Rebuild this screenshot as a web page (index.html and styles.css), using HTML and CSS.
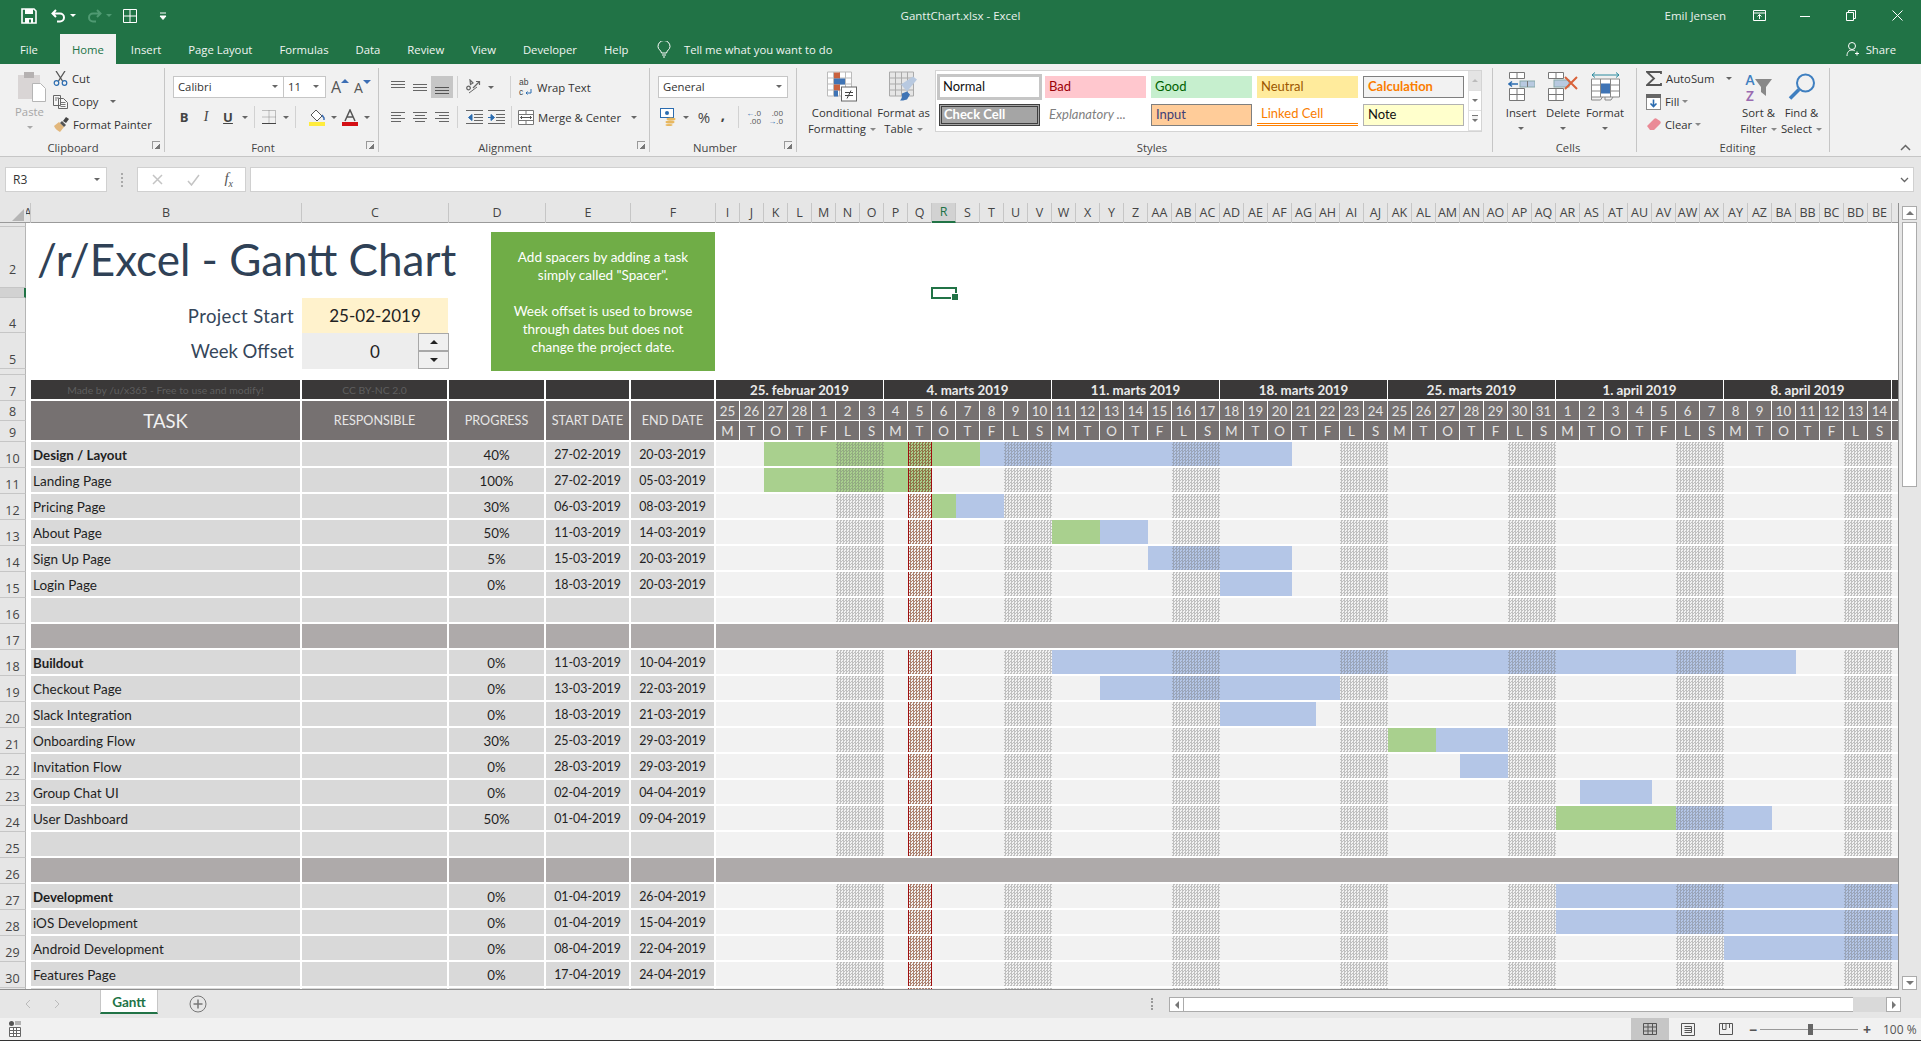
FILE: index.html
```html
<!DOCTYPE html>
<html lang="en">
<head>
  <meta charset="UTF-8" />
  <title>GanttChart.xlsx - Excel</title>
  <link rel="stylesheet" href="styles.css">
</head>
<body>
  <!-- Title bar -->
  <div class="titlebar">
    <div class="qat">
      <svg class="qat-save" width="16" height="16" viewBox="0 0 16 16"><path d="M1 1h12l2 2v12H1z" fill="none" stroke="#fff" stroke-width="1.6"/><rect x="4" y="1" width="8" height="5" fill="#fff"/><rect x="4" y="10" width="8" height="5" fill="#fff"/><rect x="8" y="11.5" width="2" height="3" fill="#217346"/></svg>
      <svg class="qat-undo" width="15" height="14" viewBox="0 0 15 14"><path d="M5 1 1.500 4.500 5 8M2 4.500h7a4 4 0 0 1 0 8H6" fill="none" stroke="#fff" stroke-width="2"/></svg>
      <span class="qat-caret"></span>
      <svg class="qat-redo" width="15" height="14" viewBox="0 0 15 14"><path d="M10 1l3.500 3.500L10 8M13 4.500H6a4 4 0 0 0 0 8h3" fill="none" stroke="#4f9a72" stroke-width="2"/></svg>
      <span class="qat-caret dim"></span>
      <svg class="qat-table" width="14" height="14" viewBox="0 0 14 14"><path d="M.5.500h13v13H.5zM7 .5v13M.5 7h13" fill="none" stroke="#fff"/></svg>
      <svg class="qat-more" width="8" height="8" viewBox="0 0 8 8"><path d="M1 1h6M1 4h6L4 7.500z" fill="#fff" stroke="#fff"/></svg>
    </div>
    <div class="doc-title">GanttChart.xlsx - Excel</div>
    <div class="window-area">
      <span class="user">Emil Jensen</span>
      <span class="win-btn"><svg width="13" height="11" viewBox="0 0 13 11"><path d="M.5.500h12v10H.5zM.5 3h12M6.500 9V4.500M4.500 6.500l2-2 2 2" fill="none" stroke="#fff"/></svg></span>
      <span class="win-btn"><svg width="10" height="10" viewBox="0 0 10 10"><path d="M0 5.500h10" stroke="#fff"/></svg></span>
      <span class="win-btn"><svg width="10" height="11" viewBox="0 0 10 11"><path d="M.5 2.500h7v8h-7zM2.500 2.500v-2h7v8h-2" fill="none" stroke="#fff"/></svg></span>
      <span class="win-btn"><svg width="11" height="11" viewBox="0 0 11 11"><path d="M.5.500l10 10M10.500.5l-10 10" stroke="#fff"/></svg></span>
    </div>
  </div>

  <!-- Ribbon tabs -->
  <div class="tabs">
    <span class="tab">File</span>
    <span class="tab active">Home</span>
    <span class="tab">Insert</span>
    <span class="tab">Page Layout</span>
    <span class="tab">Formulas</span>
    <span class="tab">Data</span>
    <span class="tab">Review</span>
    <span class="tab">View</span>
    <span class="tab">Developer</span>
    <span class="tab">Help</span>
    <span class="tell-me">
      <svg width="14" height="17" viewBox="0 0 14 17"><path d="M4.500 12C4 9 1 8.500 1 5.500a6 6 0 0 1 12 0C13 8.500 10 9 9.500 12zM5 14h4M6 16h2" fill="none" stroke="#fff"/></svg>
      Tell me what you want to do
    </span>
    <span class="share">
      <svg width="15" height="16" viewBox="0 0 15 16"><circle cx="6" cy="5" r="3.500" fill="none" stroke="#fff"/><path d="M1 15c0-4 2-6 5-6 1.500 0 2.500.5 3 1M11 10.500v4M9 12.500h4" fill="none" stroke="#fff"/></svg>
      Share
    </span>
  </div>

  <!-- Ribbon -->
  <div class="ribbon">
    <div class="group g-clipboard">
      <div class="group-body">
        <div class="paste">
          <svg width="28" height="30" viewBox="0 0 28 30"><rect x="0" y="3" width="22" height="24" fill="#d9d5d5"/><rect x="6" y="0" width="10" height="6" fill="#b5b1b1"/><path d="M14.500 11.500h8l5 5v13h-13z" fill="#fff" stroke="#b5b5b5"/></svg>
          <span class="paste-label">Paste</span>
          <span class="caret pale"></span>
        </div>
        <div class="small-col">
          <div class="small-row">
            <svg class="small-icon" width="15" height="15" viewBox="0 0 15 15"><path d="M3 0l6.500 10M12 0 5.500 10" stroke="#555" stroke-width="1.300" fill="none"/><circle cx="3.500" cy="12" r="2.300" fill="none" stroke="#2b6cb0" stroke-width="1.200"/><circle cx="11.500" cy="12" r="2.300" fill="none" stroke="#2b6cb0" stroke-width="1.200"/></svg>
            Cut
          </div>
          <div class="small-row">
            <svg class="small-icon" width="15" height="14" viewBox="0 0 15 14"><path d="M.5.500h7v10h-7zM5.500 3.500h5l4 4v6h-9z" fill="#f6f6f6" stroke="#666"/><path d="M7.500 7.500h5M7.500 9.500h5M7.500 11.500h5M2 3h4M2 5h2" stroke="#777"/></svg>
            Copy <span class="caret copy-caret"></span>
          </div>
          <div class="small-row">
            <svg class="small-icon" width="16" height="15" viewBox="0 0 16 15"><path d="M1 9l5-4 5 5-4 5C5 14 2 12 1 9z" fill="#e2b77c"/><path d="M7 6l4 4 2-2-4-4z" fill="#555"/><path d="M10 4l3-4 3 2-3 4z" fill="#444"/></svg>
            Format Painter
          </div>
        </div>
      </div>
      <div class="group-label">Clipboard</div>
      <span class="launcher"></span>
    </div>

    <div class="group g-font">
      <div class="group-body stacked">
        <div class="tool-row">
          <div class="combo font-name">Calibri<span class="caret"></span></div>
          <div class="combo font-size">11<span class="caret"></span></div>
          <span class="grow-a">A<i class="tri up"></i></span>
          <span class="shrink-a">A<i class="tri down"></i></span>
        </div>
        <div class="tool-row">
          <span class="ib fmt bold">B</span>
          <span class="ib fmt italic">I</span>
          <span class="ib fmt underline">U</span>
          <span class="caret-btn"><span class="caret"></span></span>
          <span class="sep"></span>
          <span class="ib"><svg width="14" height="14" viewBox="0 0 14 14"><path d="M.5.500h13v13H.5M7 .5v13M.5 7h13" fill="none" stroke="#888" stroke-dasharray="1 1"/><path d="M0 13.500h14" stroke="#444"/></svg></span>
          <span class="caret-btn"><span class="caret"></span></span>
          <span class="sep"></span>
          <span class="ib fill-btn"><svg width="17" height="17" viewBox="0 0 17 17"><path d="M7 1l6 6-5 5-6-6z" fill="#fff" stroke="#555"/><path d="M13 6l2 3v2" stroke="#3c6eb4" stroke-width="1.500" fill="none"/><rect x="0" y="13" width="16" height="4" fill="#ffec3d"/></svg></span>
          <span class="caret-btn"><span class="caret"></span></span>
          <span class="ib"><svg width="16" height="17" viewBox="0 0 16 17"><path d="M3 12 8 1l5 11M5 8h6" fill="none" stroke="#555" stroke-width="1.500"/><rect y="13" width="16" height="4" fill="#d40f14"/></svg></span>
          <span class="caret-btn"><span class="caret"></span></span>
        </div>
      </div>
      <div class="group-label">Font</div>
      <span class="launcher"></span>
    </div>

    <div class="group g-align">
      <div class="group-body stacked">
        <div class="tool-row">
          <span class="ib"><svg width="14" height="14" viewBox="0 0 14 14"><path d="M0 1.500h14M0 4.500h14M0 7.500h14" stroke="#666"/></svg></span>
          <span class="ib"><svg width="14" height="14" viewBox="0 0 14 14"><path d="M0 4.500h14M0 7.500h14M0 10.500h14" stroke="#666"/></svg></span>
          <span class="ib pressed"><svg width="14" height="14" viewBox="0 0 14 14"><path d="M0 7.500h14M0 10.500h14M0 13.500h14" stroke="#555"/></svg></span>
          <span class="sep"></span>
          <span class="ib orient"><svg width="16" height="16" viewBox="0 0 16 16"><path d="M4 1l3 3-2.500 1.500zM1.500 7.500a1.800 1.800 0 1 0 2.500 2.500 1.800 1.800 0 0 0-2.500-2.500zM7 9l6-6M10 2.500h3.500V6" fill="none" stroke="#666" stroke-width="1.200"/><path d="M3 14l8-6" stroke="#666"/></svg></span>
          <span class="caret-btn"><span class="caret"></span></span>
          <span class="sep sep-wrap"></span>
          <span class="wrap-mark"><span class="wm-ab">ab</span><span class="wm-c">c<svg width="8" height="7" viewBox="0 0 8 7"><path d="M7 0v4H2M3.500 2.500 2 4l1.500 1.500" fill="none" stroke="#2b6cb0"/></svg></span></span>
          <span class="tool-text">Wrap Text</span>
        </div>
        <div class="tool-row">
          <span class="ib"><svg width="14" height="14" viewBox="0 0 14 14"><path d="M0 2.500h14M0 5.500h10M0 8.500h14M0 11.500h10" stroke="#666"/></svg></span>
          <span class="ib"><svg width="14" height="14" viewBox="0 0 14 14"><path d="M0 2.500h14M2 5.500h10M0 8.500h14M2 11.500h10" stroke="#666"/></svg></span>
          <span class="ib"><svg width="14" height="14" viewBox="0 0 14 14"><path d="M0 2.500h14M4 5.500h10M0 8.500h14M4 11.500h10" stroke="#666"/></svg></span>
          <span class="sep"></span>
          <span class="ib orient"><svg width="17" height="14" viewBox="0 0 17 14"><path d="M0 .5h17M0 13.500h17M8 4.500h9M8 7.500h9M8 10.500h9" stroke="#666"/><path d="M6 4.500 2.500 7.500 6 10.500zM3 7.500h3" fill="#2b6cb0" stroke="#2b6cb0"/></svg></span>
          <span class="ib"><svg width="17" height="14" viewBox="0 0 17 14"><path d="M0 .5h17M0 13.500h17M8 4.500h9M8 7.500h9M8 10.500h9" stroke="#666"/><path d="M3 4.500 6.500 7.500 3 10.500zM0 7.500h4" fill="#2b6cb0" stroke="#2b6cb0"/></svg></span>
          <span class="sep sep-merge"></span>
          <span class="ib"><svg width="16" height="15" viewBox="0 0 16 15"><path d="M.5.500h15v14H.5zM.5 4.500h15M.5 10.500h15M8 .5v4M8 10.500v4" fill="#fff" stroke="#777"/><path d="M2.500 7.500h11M4 6 2.500 7.500 4 9M12 6l1.500 1.500L12 9" fill="none" stroke="#555"/></svg></span>
          <span class="tool-text">Merge &amp; Center</span>
          <span class="caret merge-caret"></span>
        </div>
      </div>
      <div class="group-label">Alignment</div>
      <span class="launcher"></span>
    </div>

    <div class="group g-number">
      <div class="group-body stacked">
        <div class="tool-row">
          <div class="combo number-format">General<span class="caret"></span></div>
        </div>
        <div class="tool-row">
          <span class="ib"><svg width="18" height="18" viewBox="0 0 18 18"><rect x=".5" y=".5" width="13" height="9" fill="#fff" stroke="#2b6cb0"/><circle cx="7" cy="5" r="2" fill="#2b6cb0"/><ellipse cx="11" cy="11" rx="4.500" ry="1.500" fill="#e8b860"/><ellipse cx="10" cy="14" rx="4.500" ry="1.500" fill="#e8b860"/><ellipse cx="9" cy="17" rx="3.500" ry="1" fill="#e8b860"/></svg></span>
          <span class="caret-btn"><span class="caret"></span></span>
          <span class="ib percent">%</span>
          <span class="ib comma">,</span>
          <span class="sep"></span>
          <span class="dec-mark"><span><b>←</b>.0</span><span>.00</span></span>
          <span class="dec-mark"><span>.00</span><span><b>→</b>.0</span></span>
        </div>
      </div>
      <div class="group-label">Number</div>
      <span class="launcher"></span>
    </div>

    <div class="group g-styles">
      <div class="group-body">
        <div class="big-btn cond">
          <svg class="big-icon" width="30" height="30" viewBox="0 0 30 30"><path d="M.5.500h24v24H.5zM.5 6.500h24M.5 12.500h24M.5 18.500h24M6.500.5v24M12.500.5v24M18.500.5v24" fill="#fff" stroke="#bbb"/><rect x="7" y="1" width="6" height="6" fill="#c9623f"/><rect x="7" y="7" width="11" height="6" fill="#3f74b5"/><rect x="7" y="13" width="6" height="6" fill="#c9623f"/><rect x="7" y="19" width="4" height="6" fill="#3f74b5"/><rect x="14.500" y="15.500" width="15" height="14" fill="#fff" stroke="#666"/><path d="M18 21h8M18 24h8M24 19l-4 8" stroke="#444" fill="none"/></svg>
          <span>Conditional</span>
          <span>Formatting<i class="caret inline"></i></span>
        </div>
        <div class="big-btn table-btn">
          <svg class="big-icon" width="30" height="30" viewBox="0 0 30 30"><path d="M.5.500h24v24H.5zM.5 6.500h24M.5 12.500h24M.5 18.500h24M6.500.5v24M12.500.5v24M18.500.5v24" fill="#e6e6e6" stroke="#aaa"/><path d="M12 13l12-8 4 3-10 12z" fill="#b8c9e0"/><path d="M13 22l5-2 3 3-3 5c-3 1-5 1-7 1 2-2 2-4 2-7z" fill="#3f74b5"/></svg>
          <span>Format as</span>
          <span>Table<i class="caret inline"></i></span>
        </div>
        <div class="gallery">
          <div class="style-grid">
            <span class="style s-normal">Normal</span>
            <span class="style s-bad">Bad</span>
            <span class="style s-good">Good</span>
            <span class="style s-neutral">Neutral</span>
            <span class="style s-calc">Calculation</span>
            <span class="style s-check">Check Cell</span>
            <span class="style s-expl">Explanatory ...</span>
            <span class="style s-input">Input</span>
            <span class="style s-linked">Linked Cell</span>
            <span class="style s-note">Note</span>
          </div>
          <div class="gallery-scroll">
            <span class="gs-btn off"><i class="tri up"></i></span>
            <span class="gs-btn"><i class="tri down"></i></span>
            <span class="gs-btn"><i class="tri down barred"></i></span>
          </div>
        </div>
      </div>
      <div class="group-label">Styles</div>
    </div>

    <div class="group g-cells">
      <div class="group-body">
        <div class="big-btn cell-btn">
          <svg class="big-icon" width="27" height="29" viewBox="0 0 27 29"><path d="M1.500.5h15v6h-15zM9 .5v6M1.500 16.500h15v12h-15zM9 16.500v12M1.500 22.500h15" fill="#fff" stroke="#777"/><rect x="12" y="9" width="15" height="6" fill="#b8c9e0" stroke="#8aa"/><path d="M19.500 9v6" stroke="#777"/><path d="M10 12H1M4 9.500 1 12l3 2.500" fill="none" stroke="#2b6cb0" stroke-width="1.500"/></svg>
          <span>Insert</span>
          <span class="caret"></span>
        </div>
        <div class="big-btn cell-btn">
          <svg class="big-icon" width="30" height="29" viewBox="0 0 30 29"><path d="M.5.500h15v6H.5zM8 .5v6M.5 16.500h15v12H.5zM8 16.500v12M.5 22.500h15" fill="#fff" stroke="#777"/><rect x="6" y="8" width="15" height="7" fill="#b8c9e0" stroke="#8aa"/><path d="M17 5l12 12M29 5 17 17" stroke="#d9623a" stroke-width="2"/></svg>
          <span>Delete</span>
          <span class="caret"></span>
        </div>
        <div class="big-btn cell-btn">
          <svg class="big-icon" width="29" height="30" viewBox="0 0 29 30"><path d="M1 3.500h27M4 1 1 3.500 4 6M25 1l3 2.500L25 6" fill="none" stroke="#2b8a9e"/><path d="M.5 7.500h28v18H.5zM9.500 7.500v18M19.500 7.500v18M.5 13.500h28M.5 19.500h28" fill="#fff" stroke="#888"/><rect x="10" y="12" width="9" height="10" fill="#3f74b5"/><path d="M.5 25.500v3h9l2-3M14 25.500v3h6l2-3" fill="none" stroke="#888"/></svg>
          <span>Format</span>
          <span class="caret"></span>
        </div>
      </div>
      <div class="group-label">Cells</div>
    </div>

    <div class="group g-editing">
      <div class="group-body">
        <div class="small-col edit-col">
          <div class="small-row">
            <svg class="small-icon" width="16" height="15" viewBox="0 0 16 15"><path d="M15 3V1H1l7 6.500L1 14h14v-2" fill="none" stroke="#555" stroke-width="1.800"/></svg>
            AutoSum <span class="caret sum-caret"></span>
          </div>
          <div class="small-row">
            <svg class="small-icon" width="15" height="16" viewBox="0 0 15 16"><rect x=".5" y="3.500" width="14" height="12" fill="#fff" stroke="#888"/><rect width="15" height="4" fill="#666"/><path d="M7.500 5.500v7M4.500 9.500l3 3 3-3" fill="none" stroke="#2b6cb0" stroke-width="1.600"/></svg>
            Fill <span class="caret text-caret"></span>
          </div>
          <div class="small-row">
            <svg class="small-icon" width="15" height="13" viewBox="0 0 15 13"><path d="M1 8l7-7c1-1 2-1 3 0l3 2c1 1 1 2 0 3l-6 6H4z" fill="#ea8a96"/></svg>
            Clear <span class="caret text-caret"></span>
          </div>
        </div>
        <div class="big-btn edit-btn">
          <div class="sort-icon">
            <span class="az"><span class="az-a">A</span><span class="az-z">Z</span></span>
            <svg width="17" height="17" viewBox="0 0 17 17"><path d="M0 0h17l-6 8v9l-5-4V8z" fill="#888"/></svg>
          </div>
          <span>Sort &amp;</span>
          <span>Filter<i class="caret inline"></i></span>
        </div>
        <div class="big-btn edit-btn">
          <svg class="big-icon" width="28" height="28" viewBox="0 0 28 28"><circle cx="17.500" cy="10.500" r="8.500" fill="none" stroke="#3f7fc0" stroke-width="2"/><path d="M11 17 2 26" stroke="#3f7fc0" stroke-width="3.500"/></svg>
          <span>Find &amp;</span>
          <span>Select<i class="caret inline"></i></span>
        </div>
      </div>
      <div class="group-label">Editing</div>
    </div>
    <svg class="collapse" width="11" height="7" viewBox="0 0 11 7"><path d="M1 6l4.500-4.500L10 6" fill="none" stroke="#666" stroke-width="1.500"/></svg>
  </div>

  <!-- Formula bar -->
  <div class="formula-bar">
    <div class="name-box">R3<span class="caret"></span></div>
    <div class="fb-dots"></div>
    <div class="fx-box">
      <svg width="11" height="11" viewBox="0 0 11 11"><path d="M1 1l9 9M10 1l-9 9" stroke="#c4c4c4" stroke-width="1.500"/></svg>
      <svg width="13" height="12" viewBox="0 0 13 12"><path d="M1 7l3.500 4L12 1" fill="none" stroke="#c4c4c4" stroke-width="1.500"/></svg>
      <span class="fx">f<sub>x</sub></span>
    </div>
    <div class="formula-input">
      <svg width="9" height="6" viewBox="0 0 9 6"><path d="M1 1l3.500 3.500L8 1" fill="none" stroke="#666" stroke-width="1.300"/></svg>
    </div>
  </div>

  <!-- Worksheet -->
  <div class="workbook">
    <div class="sheet">
      <div class="row col-heads" id="colHeads"></div>

      <div class="top-block">
        <div class="rn rn1"></div>
        <div class="rn rn2">2</div>
        <div class="rn rn3 selected"></div>
        <div class="rn rn4">4</div>
        <div class="rn rn5">5</div>
        <div class="rn rn6"></div>
        <h1 class="sheet-title">/r/Excel - Gantt Chart</h1>
        <div class="field-label fl-start">Project Start</div>
        <div class="field-value fv-start">25-02-2019</div>
        <div class="field-label fl-offset">Week Offset</div>
        <div class="field-value fv-offset">0
          <div class="spin">
            <span class="spin-btn"><i class="tri up dark"></i></span>
            <span class="spin-btn"><i class="tri down dark"></i></span>
          </div>
        </div>
        <div class="note-box">
          <p>Add spacers by adding a task<br>simply called "Spacer".</p>
          <p>Week offset is used to browse<br>through dates but does not<br>change the project date.</p>
        </div>
        <div class="cell-cursor-row"><span class="cell-cursor"></span></div>
      </div>

      <div id="rows"></div>
    </div>
    <div class="vscroll">
      <span class="sb-btn sb-up"><i class="tri up"></i></span>
      <span class="sb-thumb"></span>
      <span class="sb-btn sb-down"><i class="tri down"></i></span>
    </div>
  </div>

  <!-- Sheet tabs -->
  <div class="sheetbar">
    <div class="sheet-nav">
      <svg width="6" height="10" viewBox="0 0 6 10"><path d="M5 1 1 5l4 4" fill="none" stroke="#bbb"/></svg>
      <svg width="6" height="10" viewBox="0 0 6 10"><path d="M1 1l4 4-4 4" fill="none" stroke="#bbb"/></svg>
    </div>
    <div class="sheet-tab">Gantt</div>
    <svg class="add-sheet" width="18" height="18" viewBox="0 0 18 18"><circle cx="9" cy="9" r="8" fill="none" stroke="#777"/><path d="M9 4.500v9M4.500 9h9" stroke="#777" stroke-width="1.500"/></svg>
    <div class="tab-dots"></div>
    <div class="hscroll">
      <span class="sb-btn"><i class="tri left"></i></span>
      <span class="hs-thumb"></span>
      <span class="sb-btn hs-end"><i class="tri right"></i></span>
    </div>
  </div>

  <!-- Status bar -->
  <div class="statusbar">
    <svg class="macro" width="14" height="16" viewBox="0 0 14 16"><circle cx="3.500" cy="2.500" r="2.500" fill="#555"/><path d="M7 1h6M7 3h6" stroke="#777"/><path d="M1.500 6.500h11v9h-11zM1.500 9.500h11M1.500 12.500h11M5.500 6.500v9M8.500 6.500v9" fill="#fff" stroke="#666"/></svg>
    <div class="view-btn on"><svg width="14" height="12" viewBox="0 0 14 12"><path d="M.5.500h13v11H.5zM.5 4h13M.5 8h13M5 .5v11M9.500.5v11" fill="none" stroke="#555"/></svg></div>
    <div class="view-btn"><svg width="14" height="13" viewBox="0 0 14 13"><path d="M.5.500h13v12H.5zM3.500 3.500h7v6h-7M3.500 5.500h7M3.500 7.500h7" fill="none" stroke="#555"/></svg></div>
    <div class="view-btn"><svg width="14" height="12" viewBox="0 0 14 12"><path d="M.5.500h13v11H.5zM7 .5v6H3.500V.5M10.500.5V5" fill="none" stroke="#555"/></svg></div>
    <div class="zoom">
      <span class="zoom-sign">−</span>
      <span class="zoom-track"><span class="zoom-thumb"></span></span>
      <span class="zoom-sign">+</span>
      <span class="zoom-val">100 %</span>
    </div>
  </div>

  <script src="script.js"></script>
</body>
</html>
```

FILE: styles.css
```css
* { box-sizing: border-box; margin: 0; padding: 0; }
html, body { height: 100%; overflow: hidden; }
body {
  width: 1921px; height: 1041px;
  display: flex; flex-direction: column;
  background: #e6e6e6; color: #333;
  font-family: "Open Sans", "Liberation Sans", sans-serif;
  font-size: 11.3px;
}

/* small triangles */
.caret {
  display: inline-block; width: 0; height: 0;
  border-left: 3px solid transparent; border-right: 3px solid transparent;
  border-top: 3.5px solid #666;
}
.caret.pale { border-top-color: #aaa; }
.caret.inline { margin-left: 4px; vertical-align: 2px; border-top-color: #888; }
.tri { display: block; width: 0; height: 0; border-style: solid; border-color: transparent; }
.tri.up { border-width: 0 4px 4px; border-bottom-color: #777; }
.tri.down { border-width: 4px 4px 0; border-top-color: #777; }
.tri.left { border-width: 4px 4px 4px 0; border-right-color: #777; }
.tri.right { border-width: 4px 0 4px 4px; border-left-color: #777; }
.tri.dark.up { border-bottom-color: #222; }
.tri.dark.down { border-top-color: #222; }

/* title bar */
.titlebar {
  height: 34px; flex: none;
  display: grid; grid-template-columns: 1fr auto 1fr; align-items: center;
  padding-bottom: 3px;
  background: #217346; color: #e8f1ec;
}
.qat { display: flex; align-items: center; padding-left: 21px; }
.qat-undo { margin-left: 14px; }
.qat-caret {
  width: 0; height: 0; margin-left: 4px;
  border-left: 3px solid transparent; border-right: 3px solid transparent;
  border-top: 3px solid #fff;
}
.qat-caret.dim { border-top-color: #4f9a72; }
.qat-redo { margin-left: 11px; }
.qat-table { margin-left: 11px; }
.qat-more { margin-left: 22px; }
.doc-title { font-size: 11.5px; }
.window-area { display: flex; justify-content: flex-end; align-items: center; height: 100%; }
.user { margin-right: 10px; font-size: 11.5px; }
.win-btn { width: 46px; height: 100%; display: flex; align-items: center; justify-content: center; }
.window-area .win-btn:last-child { width: 47px; }

/* ribbon tabs */
.tabs {
  height: 30px; flex: none;
  display: flex; align-items: stretch;
  background: #217346; color: #f0f5f2;
  font-size: 11.3px;
}
.tab { padding: 0 13.5px; display: flex; align-items: center; }
.tab:first-child { padding-left: 20px; padding-right: 22px; }
.tab.active { background: #f1f1f1; color: #217346; padding: 0 12px; margin-right: 15px; }
.tab.active + .tab { padding-left: 0; }
.tell-me { display: flex; align-items: center; gap: 13px; margin-left: 15px; }
.share { display: flex; align-items: center; gap: 5px; margin-left: auto; margin-right: 25px; }

/* ribbon */
.ribbon {
  position: relative;
  height: 93px; flex: none;
  display: flex;
  background: #f1f1f1;
  border-bottom: 1px solid #c6c6c6;
}
.group {
  position: relative;
  height: 84px; margin-top: 4px;
  display: flex; flex-direction: column;
  border-right: 1px solid #c6c6c6;
}
.g-clipboard { width: 165px; }
.g-font { width: 214px; padding-left: 8px; }
.g-align { width: 271px; padding-left: 8px; }
.g-number { width: 147px; padding-left: 8px; }
.g-styles { width: 696px; padding-left: 15px; }
.g-cells { width: 144px; padding-left: 7px; }
.g-editing { width: 193px; padding-left: 9px; }
.group-body { height: 72px; flex: none; display: flex; }
.group-body.stacked { flex-direction: column; gap: 8px; padding-top: 8px; }
.group-label { flex: none; text-align: center; line-height: 16px; color: #444; }
.g-clipboard .group-label { padding-right: 18px; }
.g-font .group-label { margin-left: -8px; padding-right: 17px; }
.g-align .group-label { margin-left: -8px; padding-right: 18px; }
.g-number .group-label { margin-left: -8px; padding-right: 16px; }
.launcher {
  position: absolute; right: 4px; bottom: 3px;
  width: 8px; height: 8px;
  border-left: 1px solid #999; border-top: 1px solid #999;
  background: linear-gradient(135deg, transparent 60%, #777 60%);
}
.paste {
  width: 47px; margin-left: 6px;
  display: flex; flex-direction: column; align-items: center;
  padding-top: 4px;
}
.paste svg { margin-left: 5px; }
.paste-label { color: #a6a6a6; margin-top: 2px; line-height: 16px; }
.paste .caret { margin-top: 6px; }
.small-col { display: flex; flex-direction: column; margin-top: -1px; }
.small-row { height: 23px; display: flex; align-items: center; gap: 4px; white-space: nowrap; }
.small-icon { flex: none; }
.copy-caret { margin-left: 8px; }
.tool-row { height: 22px; display: flex; align-items: center; }
.combo {
  height: 22px; background: #fff; border: 1px solid #c6c6c6;
  display: flex; align-items: center; justify-content: space-between;
  padding: 0 5px 2px 4px;
}
.font-name { width: 111px; }
.font-size { width: 43px; margin-left: -1px; padding-right: 6px; }
.number-format { width: 130px; }
.grow-a { margin-left: 5px; width: 23px; display: flex; font-size: 16px; color: #555; }
.shrink-a { width: 20px; display: flex; font-size: 14px; color: #555; align-items: flex-end; }
.grow-a .tri { margin-top: 3px; border-bottom-color: #3c6eb4; }
.shrink-a .tri { margin-bottom: 13px; border-top-color: #3c6eb4; }
.ib { width: 22px; height: 22px; display: flex; align-items: center; justify-content: center; flex: none; color: #444; }
.caret-btn { width: 11px; display: flex; justify-content: center; flex: none; }
.sep { width: 1px; height: 22px; background: #d2d2d2; margin: 0 3px 0 4px; flex: none; }
.fmt { font-family: "Liberation Serif", serif; font-size: 14px; }
.fmt.bold { font-family: "Open Sans", sans-serif; font-weight: 700; font-size: 13px; }
.fmt.italic { font-style: italic; }
.fmt.underline { text-decoration: underline; font-weight: 700; font-family: "Open Sans", sans-serif; font-size: 13px; }
.fill-btn { margin-left: 7px; }
.pressed { background: #c6c6c6; }
.orient { margin-left: 2px; }
.sep-wrap { margin-left: 14px; }
.sep-merge { margin-left: 4px; }
.wrap-mark {
  width: 22px; height: 22px; flex: none;
  display: flex; flex-direction: column; justify-content: center; padding-left: 5px;
  font-family: "Liberation Sans", sans-serif; font-size: 8.5px; line-height: 10px; color: #444;
}
.wm-c { display: flex; align-items: center; gap: 1px; }
.tool-text { margin-left: 1px; white-space: nowrap; }
.merge-caret { margin-left: 10px; }
.percent { font-size: 15px; margin-left: 2px; }
.comma { font-size: 15px; font-weight: 700; margin-left: -3px; padding-bottom: 6px; }
.dec-mark {
  width: 22px; height: 22px; flex: none;
  display: flex; flex-direction: column; align-items: flex-end; justify-content: center; padding-right: 3px;
  font-size: 8px; line-height: 8px; color: #555;
}
.dec-mark b { color: #2b6cb0; font-weight: 400; }
.big-btn {
  display: flex; flex-direction: column; align-items: center;
  line-height: 16px; text-align: center; white-space: nowrap;
}
.big-icon { height: 35px; flex: none; padding-bottom: 2px; margin-top: 2px; }
.cond { width: 60px; }
.table-btn { width: 63px; }
.cell-btn { width: 42px; }
.cell-btn .caret { margin-top: 6px; }
.edit-col { width: 91px; }
.edit-btn { width: 43px; }
.sum-caret { margin-left: 8px; }
.text-caret { margin-left: -1px; border-top-color: #888; }
.sort-icon { height: 35px; flex: none; margin-top: 2px; display: flex; align-items: center; }
.az { display: flex; flex-direction: column; font-family: Lato, sans-serif; font-size: 13px; line-height: 16px; font-weight: 700; }
.az-a { color: #3f7fc0; }
.az-z { color: #9a6bb0; }
.collapse { position: absolute; right: 10px; bottom: 5px; }

/* styles gallery */
.gallery {
  margin-top: 2px; height: 62px; width: 547px;
  background: #fff; border: 1px solid #d4d4d4;
  display: flex; justify-content: space-between;
}
.style-grid {
  margin: 5px 0 0 3px;
  display: grid; grid-template-columns: repeat(5, 101px); grid-template-rows: 22px 22px;
  column-gap: 5px; row-gap: 6px;
  font-family: Lato, sans-serif; font-size: 13px;
}
.style { display: flex; align-items: center; padding: 0 0 2px 4px; }
.s-normal { background: #fff; color: #111; outline: 3px solid #c6c6c6; outline-offset: -1px; }
.s-bad { background: #ffc7ce; color: #9c0006; }
.s-good { background: #c6efce; color: #006100; }
.s-neutral { background: #ffeb9c; color: #9c5700; }
.s-calc { background: #f2f2f2; color: #fa7d00; font-weight: 700; border: 1px solid #7f7f7f; }
.s-check { background: #a5a5a5; color: #fff; font-weight: 700; border: 3px double #3f3f3f; padding-left: 2px; }
.s-expl { background: #fff; color: #7f7f7f; font-style: italic; }
.s-input { background: #ffcc99; color: #3f3f76; border: 1px solid #7f7f7f; }
.s-linked { background: #fff; color: #fa7d00; border-bottom: 3px double #ff8001; }
.s-note { background: #ffffcc; color: #111; border: 1px solid #b2b2b2; }
.gallery-scroll { width: 13px; display: flex; flex-direction: column; }
.gs-btn { flex: 1; display: flex; align-items: center; justify-content: center; border-left: 1px solid #e0e0e0; border-bottom: 1px solid #e0e0e0; }
.gs-btn.off { background: #e4e4e4; }
.gs-btn .tri { border-width: 3px 3px 0; }
.gs-btn .tri.up { border-width: 0 3px 3px; border-bottom-color: #bbb; }
.tri.barred { box-shadow: 0 -3px 0 0 #f1f1f1, 0 -4px 0 0 #777; width: 0; }

/* formula bar */
.formula-bar {
  height: 46px; flex: none;
  display: flex; align-items: flex-start;
  padding: 10px 7px 0 5px;
  background: #e6e6e6;
}
.name-box, .fx-box, .formula-input {
  height: 25px; background: #fff; border: 1px solid #d0d0d0;
  display: flex; align-items: center;
}
.name-box { width: 102px; padding: 0 6px 0 7px; justify-content: space-between; font-size: 12px; }
.fb-dots { width: 3px; height: 14px; margin: 6px 13px 0 14px; border-left: 2px dotted #aaa; }
.fx-box { width: 109px; padding: 0 12px 0 14px; justify-content: space-between; }
.fx { font-family: "Liberation Serif", serif; font-style: italic; font-size: 15px; color: #555; }
.fx sub { font-size: 10px; }
.formula-input { flex: 1; margin-left: 4px; justify-content: flex-end; padding-right: 4px; }

/* worksheet */
.workbook { height: 787px; flex: none; display: flex; }
.sheet {
  width: 1899px; height: 787px; overflow: hidden;
  background: #fff;
  border-right: 1px solid #8f8f8f; border-bottom: 1px solid #8f8f8f;
  font-family: Lato, sans-serif; font-size: 13.3px; color: #1f1f1f;
}
.row {
  display: grid;
  grid-template-columns: 26px 5px 271px 147px 97px 85px 85px 1200px;
  height: 26px;
}
.col-heads {
  height: 20px; background: #e6e6e6;
  border-bottom: 1px solid #9a9a9a;
  font-family: "Open Sans", sans-serif; font-size: 12.5px; color: #444;
}
.ch { display: flex; align-items: center; justify-content: center; border-right: 1px solid #c6c6c6; line-height: 1; overflow: hidden; }
.ch.corner { border: 0; position: relative; }
.ch.corner::after {
  content: ""; position: absolute; right: 2px; bottom: 2px;
  border-left: 12px solid transparent; border-bottom: 12px solid #b5b5b5;
}
.ch.sel { background: #d2d2d2; color: #217346; border-bottom: 2px solid #217346; height: 20px; }
.ch-days { display: grid; grid-template-columns: repeat(50, 24px); }
.rn {
  display: flex; align-items: flex-end; justify-content: center;
  background: #e6e6e6; border-right: 1px solid #b5b5b5; border-bottom: 1px solid #c6c6c6;
  font-family: "Open Sans", sans-serif; font-size: 12.5px; color: #444; line-height: 16px;
  grid-column: 1;
}
.rn.selected { background: #d2d2d2; border-right: 2px solid #217346; }

/* rows 1-6: title and settings */
.top-block {
  display: grid;
  grid-template-columns: 26px 5px 271px 147px 97px 85px 85px 1200px;
  grid-template-rows: 4px 61px 10px 35px 36px 6px;
}
.rn1 { grid-row: 1; }
.rn2 { grid-row: 2; padding-bottom: 9px; }
.rn3 { grid-row: 3; }
.rn4 { grid-row: 4; }
.rn5 { grid-row: 5; }
.rn6 { grid-row: 6; }
.sheet-title {
  grid-row: 2; grid-column: 3 / 5;
  font-size: 44px; font-weight: 400; color: #2f4156; white-space: nowrap;
  padding: 0 0 0 6px; align-self: end; line-height: 58px;
}
.field-label { grid-column: 3; display: flex; align-items: center; justify-content: flex-end; padding-right: 8px; font-size: 18.5px; color: #35465a; }
.fl-start { grid-row: 4; letter-spacing: .4px; }
.fl-offset { grid-row: 5; }
.field-value { grid-column: 4; display: flex; align-items: center; justify-content: center; margin-right: 1px; font-size: 17px; color: #222; position: relative; }
.fv-start { grid-row: 4; background: #fff2cc; }
.fv-offset { grid-row: 5; background: #ededed; }
.spin { position: absolute; right: -1px; top: 0; width: 31px; height: 36px; display: flex; flex-direction: column; }
.spin-btn { flex: 1; background: #f0f0f0; border: 1px solid #a8a8a8; display: flex; align-items: center; justify-content: center; }
.note-box {
  grid-row: 2 / 7; grid-column: 5 / 8;
  margin: 5px 1px 4px 42px;
  background: #70ad47; color: #fff; text-align: center;
  display: flex; flex-direction: column; justify-content: center; gap: 18px;
  line-height: 18px; font-size: 13.5px;
}
.cell-cursor-row { grid-row: 3; grid-column: 8; display: grid; grid-template-columns: repeat(50, 24px); }
.cell-cursor { grid-column: 10; margin: -1px; border: 2px solid #217346; position: relative; }
.cell-cursor::after {
  content: ""; position: absolute; right: -4px; bottom: -4px;
  width: 6px; height: 6px; background: #217346; border: 1px solid #fff;
}

/* rows 7-9: headers */
.band {
  margin: 5px 0 2px;
  background: #3a3838; border-right: 2px solid #fff; color: #5f5f5f;
  display: flex; align-items: center; justify-content: center;
  font-size: 10.4px; white-space: nowrap;
}
.weeks { display: grid; grid-template-columns: repeat(7, 168px) 24px; margin: 5px 0 2px; }
.week { background: #3a3838; border-right: 1px solid #fff; color: #eaeaea; font-weight: 700; display: flex; align-items: center; justify-content: center; }
.head-block {
  display: grid;
  grid-template-columns: 26px 5px 271px 147px 97px 85px 85px 1200px;
  grid-template-rows: 20px 21px;
}
.hd {
  grid-row: 1 / 3; margin-bottom: 2px;
  background: #767171; border-right: 2px solid #fff; color: #e6e6e6;
  display: flex; align-items: center; justify-content: center;
  font-size: 12.6px;
}
.hd.task { font-size: 18.5px; color: #f2f2f2; }
.days { display: grid; grid-template-columns: repeat(50, 24px); grid-column: 8; }
.day { background: #767171; border-right: 1px solid #fff; color: #e4e4e4; display: flex; align-items: center; justify-content: center; }
.days.nums { grid-row: 1; }
.days.nums .day { border-bottom: 1px solid #fff; }
.days.letters { grid-row: 2; }
.days.letters .day { margin-bottom: 2px; }

/* task rows */
.cell {
  background: #d9d9d9; border-right: 2px solid #fff; border-bottom: 2px solid #fff;
  display: flex; align-items: center; justify-content: center; white-space: nowrap;
  padding-top: 1px;
}
.cell.name { justify-content: flex-start; padding-left: 2px; font-size: 13.5px; }
.cell.date { font-size: 12.4px; }
.bold-row .name { font-weight: 700; font-size: 13.3px; }
.spacer-row .cell { background: #aeaaaa; }
.chart {
  display: grid; grid-template-columns: repeat(50, 24px); grid-template-rows: 24px;
  height: 26px; border-bottom: 2px solid #fff;
  background: #f2f2f2;
}
.spacer-row .chart { background: #aeaaaa; }
.chart > * { grid-row: 1; }
.bar.done { background: #a9d08e; }
.bar.todo { background: #b4c6e7; }
.weekend {
  background-image: conic-gradient(rgba(110,110,110,.38) 25%, transparent 0 50%, rgba(110,110,110,.38) 0 75%, transparent 0);
  background-size: 3px 3px;
}
.today {
  background-image: conic-gradient(rgba(130,60,30,.62) 25%, transparent 0 50%, rgba(130,60,30,.62) 0 75%, transparent 0);
  background-size: 3px 3px;
  border-left: 1px solid #a01010; border-right: 1px solid #a01010;
}

/* scrollbars */
.vscroll {
  width: 22px; padding: 3px 4px 0 3px;
  display: flex; flex-direction: column;
  background: #e6e6e6;
}
.sb-btn {
  flex: none; width: 15px; height: 14px;
  background: #fff; border: 1px solid #ababab;
  display: flex; align-items: center; justify-content: center;
}
.sb-thumb { flex: none; height: 265px; margin-top: 2px; background: #fff; border: 1px solid #ababab; }
.sb-down { margin-top: auto; }
.sheetbar {
  height: 28px; flex: none;
  display: flex; align-items: flex-start;
  background: #e6e6e6;
}
.sheet-nav { width: 100px; padding: 9px 0 0 25px; display: flex; gap: 23px; }
.sheet-tab {
  width: 58px; height: 24px; padding-top: 1px;
  background: #fff; border-bottom: 2px solid #217346; border-left: 1px solid #c6c6c6; border-right: 1px solid #c6c6c6;
  color: #217346; font-weight: 700; font-family: Lato, sans-serif; font-size: 13.5px;
  display: flex; align-items: center; justify-content: center;
}
.add-sheet { margin: 5px 0 0 31px; }
.tab-dots { width: 3px; height: 12px; margin: 8px 0 0 944px; border-left: 2px dotted #999; }
.hscroll { margin: 7px 0 0 15px; display: flex; width: 732px; height: 15px; background: #d9d9d9; }
.hscroll .sb-btn { height: 15px; }
.hs-thumb { width: 669px; background: #fff; border-top: 1px solid #ababab; border-bottom: 1px solid #ababab; }
.hs-end { margin-left: auto; }

/* status bar */
.statusbar {
  height: 23px; flex: none;
  display: flex; align-items: stretch;
  background: #f1f1f1; border-bottom: 1px solid #333;
}
.macro { margin: 3px 1609px 0 8px; flex: none; }
.view-btn { width: 38px; flex: none; display: flex; align-items: center; justify-content: center; }
.view-btn.on { background: #c6c6c6; }
.zoom { display: flex; align-items: center; margin-left: 4px; font-size: 12px; color: #555; white-space: nowrap; }
.zoom-sign { width: 8px; flex: none; font-weight: 700; font-size: 14px; text-align: center; }
.zoom-track { width: 98px; height: 1px; margin: 0 5px 0 3px; background: #999; display: flex; align-items: center; padding-left: 48px; flex: none; }
.zoom-thumb { width: 5px; height: 11px; background: #666; flex: none; }
.zoom-val { margin-left: 12px; }
```

FILE: script.js
```js
// day columns start on monday 25-02-2019, column I
const START = Date.UTC(2019, 1, 25);
const DAY_COUNT = 50;
const TODAY = 8;
const LETTERS = ['M', 'T', 'O', 'T', 'F', 'L', 'S'];
const WEEKS = ['25. februar 2019', '4. marts 2019', '11. marts 2019', '18. marts 2019',
  '25. marts 2019', '1. april 2019', '8. april 2019', ''];

// name, progress, start, end (empty name = blank row, 'spacer' = grey row, * = bold)
const TASKS = [
  ['*Design / Layout', 40, '27-02-2019', '20-03-2019'],
  ['Landing Page', 100, '27-02-2019', '05-03-2019'],
  ['Pricing Page', 30, '06-03-2019', '08-03-2019'],
  ['About Page', 50, '11-03-2019', '14-03-2019'],
  ['Sign Up Page', 5, '15-03-2019', '20-03-2019'],
  ['Login Page', 0, '18-03-2019', '20-03-2019'],
  [''],
  ['spacer'],
  ['*Buildout', 0, '11-03-2019', '10-04-2019'],
  ['Checkout Page', 0, '13-03-2019', '22-03-2019'],
  ['Slack Integration', 0, '18-03-2019', '21-03-2019'],
  ['Onboarding Flow', 30, '25-03-2019', '29-03-2019'],
  ['Invitation Flow', 0, '28-03-2019', '29-03-2019'],
  ['Group Chat UI', 0, '02-04-2019', '04-04-2019'],
  ['User Dashboard', 50, '01-04-2019', '09-04-2019'],
  [''],
  ['spacer'],
  ['*Development', 0, '01-04-2019', '26-04-2019'],
  ['iOS Development', 0, '01-04-2019', '15-04-2019'],
  ['Android Development', 0, '08-04-2019', '22-04-2019'],
  ['Features Page', 0, '17-04-2019', '24-04-2019'],
  ['']
];

function el(cls, text, parent) {
  const d = document.createElement('div');
  d.className = cls;
  if (text !== undefined) d.textContent = text;
  if (parent) parent.appendChild(d);
  return d;
}

function dayIndex(str) {
  const [d, m, y] = str.split('-').map(Number);
  return (Date.UTC(y, m - 1, d) - START) / 864e5;
}

function colName(i) {
  // i = 0 is column I (9th letter)
  const n = i + 8;
  return n < 26 ? String.fromCharCode(65 + n)
    : String.fromCharCode(64 + Math.floor(n / 26)) + String.fromCharCode(65 + n % 26);
}

function span(cls, from, to, parent) {
  const d = el(cls, undefined, parent);
  d.style.gridColumn = (from + 1) + ' / ' + (to + 1);
  return d;
}

// column letters
const heads = document.getElementById('colHeads');
el('ch corner', '', heads);
['A', 'B', 'C', 'D', 'E', 'F'].forEach(c => el('ch', c, heads));
const headDays = el('ch-days', undefined, heads);
for (let i = 0; i < DAY_COUNT - 1; i++) {
  el(colName(i) === 'R' ? 'ch sel' : 'ch', colName(i), headDays);
}

const rows = document.getElementById('rows');

// row 7
const weekRow = el('row', undefined, rows);
el('rn', '7', weekRow);
el('', undefined, weekRow);
el('band', 'Made by /u/x365 - Free to use and modify!', weekRow);
el('band', 'CC BY-NC 2.0', weekRow);
el('band', '', weekRow);
el('band', '', weekRow);
el('band', '', weekRow);
const weeks = el('weeks', undefined, weekRow);
WEEKS.forEach(w => el('week', w, weeks));

// rows 8-9
const headBlock = el('head-block', undefined, rows);
el('rn', '8', headBlock);
el('rn', '9', headBlock).style.gridRow = '2';
[['TASK', 'task'], ['RESPONSIBLE', ''], ['PROGRESS', ''], ['START DATE', ''], ['END DATE', '']].forEach(([t, c], i) => {
  el('hd ' + c, t, headBlock).style.gridColumn = String(i + 3);
});
const nums = el('days nums', undefined, headBlock);
const letters = el('days letters', undefined, headBlock);
for (let i = 0; i < DAY_COUNT; i++) {
  const date = new Date(START + i * 864e5);
  el('day', i < DAY_COUNT - 1 ? date.getUTCDate() : '', nums);
  el('day', i < DAY_COUNT - 1 ? LETTERS[i % 7] : '', letters);
}

// task rows 10-31
TASKS.forEach((t, i) => {
  const [raw, progress, from, to] = t;
  const spacer = raw === 'spacer';
  const bold = raw.startsWith('*');
  const row = el('row' + (spacer ? ' spacer-row' : '') + (bold ? ' bold-row' : ''), undefined, rows);
  el('rn', i + 10 < 31 ? String(i + 10) : '', row);
  el('', undefined, row);
  el('cell name', spacer ? '' : raw.replace('*', ''), row);
  el('cell', '', row);
  el('cell', progress === undefined ? '' : progress + '%', row);
  el('cell date', from || '', row);
  el('cell date', to || '', row);

  const chart = el('chart', undefined, row);
  if (spacer) return;
  if (from) {
    const a = dayIndex(from);
    const b = dayIndex(to) + 1;
    const done = Math.round((b - a) * progress / 100);
    if (done > 0) span('bar done', a, a + done, chart);
    if (a + done < b) span('bar todo', a + done, Math.min(b, DAY_COUNT), chart);
  }
  for (let d = 5; d < DAY_COUNT; d += 7) span('weekend', d, d + 2, chart);
  span('today', TODAY, TODAY + 1, chart);
});
```
